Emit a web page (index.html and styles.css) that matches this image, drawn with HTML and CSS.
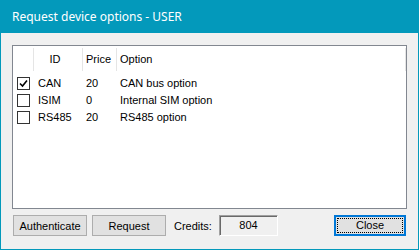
FILE: index.html
```html
<!DOCTYPE html>
<html lang="en">
<head>
  <meta charset="UTF-8">
  <meta name="viewport" content="width=device-width, initial-scale=1.0">
  <title>Request device options - USER</title>
  <link rel="stylesheet" href="styles.css">
</head>
<body>
  <div class="window">
    <div class="titlebar">Request device options - USER</div>
    <div class="client">
      <div class="listview">
        <div class="header">
          <span class="hcell"></span>
          <span class="hcell center">ID</span>
          <span class="hcell">Price</span>
          <span class="hcell">Option</span>
        </div>
        <div class="row">
          <span class="cell"><span class="check checked">
            <svg width="9" height="9" viewBox="0 0 9 9"><path d="M1 4.5 L3.5 7 L8 1.5" fill="none" stroke="#000" stroke-width="1.6"/></svg>
          </span></span>
          <span class="cell id">CAN</span>
          <span class="cell">20</span>
          <span class="cell">CAN bus option</span>
        </div>
        <div class="row">
          <span class="cell"><span class="check"></span></span>
          <span class="cell id">ISIM</span>
          <span class="cell">0</span>
          <span class="cell">Internal SIM option</span>
        </div>
        <div class="row">
          <span class="cell"><span class="check"></span></span>
          <span class="cell id">RS485</span>
          <span class="cell">20</span>
          <span class="cell">RS485 option</span>
        </div>
      </div>
      <div class="buttons">
        <button class="btn auth">Authenticate</button>
        <button class="btn request">Request</button>
        <span class="label">Credits:</span>
        <span class="credits">804</span>
        <button class="btn close"><span class="focus">Close</span></button>
      </div>
    </div>
  </div>
</body>
</html>
```

FILE: styles.css
```css
body {
  margin: 0;
  font-family: "Liberation Sans", Arial, sans-serif;
  font-size: 11px;
  color: #000;
}
.window {
  width: 419px;
  height: 250px;
  background-color: #0399bb;
  display: flex;
  flex-direction: column;
}
.titlebar {
  height: 33px;
  padding-left: 12px;
  display: flex;
  align-items: center;
  color: #fff;
  font-family: "Noto Sans", sans-serif;
  font-size: 12px;
}
.client {
  flex: 1;
  margin: 0 1px 1px 1px;
  background-color: #f0f0f0;
  padding: 12px 11px 13px 11px;
  display: flex;
  flex-direction: column;
}
.listview {
  height: 164px;
  box-sizing: border-box;
  border: 1px solid #828790;
  background-color: #fff;
}
.header {
  display: grid;
  grid-template-columns: 21px 49px 34px 1fr;
  padding: 2px 0 4px 0;
}
.hcell {
  height: 23px;
  line-height: 23px;
  border-right: 1px solid #e5e5e5;
  padding-left: 3px;
}
.hcell.center {
  padding-left: 0;
  text-align: center;
  padding-right: 6px;
}
.row {
  display: grid;
  grid-template-columns: 21px 49px 34px 1fr;
  height: 17px;
  line-height: 17px;
}
.cell {
  padding-left: 3px;
  white-space: nowrap;
}
.cell.id {
  padding-left: 4px;
}
.check {
  display: flex;
  align-items: center;
  justify-content: center;
  width: 13px;
  height: 13px;
  box-sizing: border-box;
  border: 1px solid #333;
  background-color: #fff;
  margin: 2px 0 0 1px;
}
.buttons {
  display: flex;
  align-items: center;
  margin-top: 6px;
  height: 21px;
}
.btn {
  height: 21px;
  box-sizing: border-box;
  border: 1px solid #adadad;
  background-color: #e1e1e1;
  font-family: "Liberation Sans", Arial, sans-serif;
  font-size: 11px;
  color: #000;
  padding: 0;
}
.auth {
  width: 74px;
  margin-left: 1px;
}
.request {
  width: 74px;
  margin-left: 5px;
}
.label {
  width: 45px;
  margin-left: 8px;
}
.credits {
  width: 59px;
  height: 21px;
  box-sizing: border-box;
  border: 1px solid;
  border-color: #a0a0a0 #fff #fff #a0a0a0;
  box-shadow: inset 1px 1px 0 #696969;
  text-align: center;
  line-height: 19px;
}
.close {
  width: 72px;
  margin-left: auto;
  margin-right: 1px;
  border: 2px solid #0078d7;
  padding: 1px;
}
.focus {
  display: block;
  height: 100%;
  box-sizing: border-box;
  border: 1px dotted #000;
  line-height: 13px;
}
```
